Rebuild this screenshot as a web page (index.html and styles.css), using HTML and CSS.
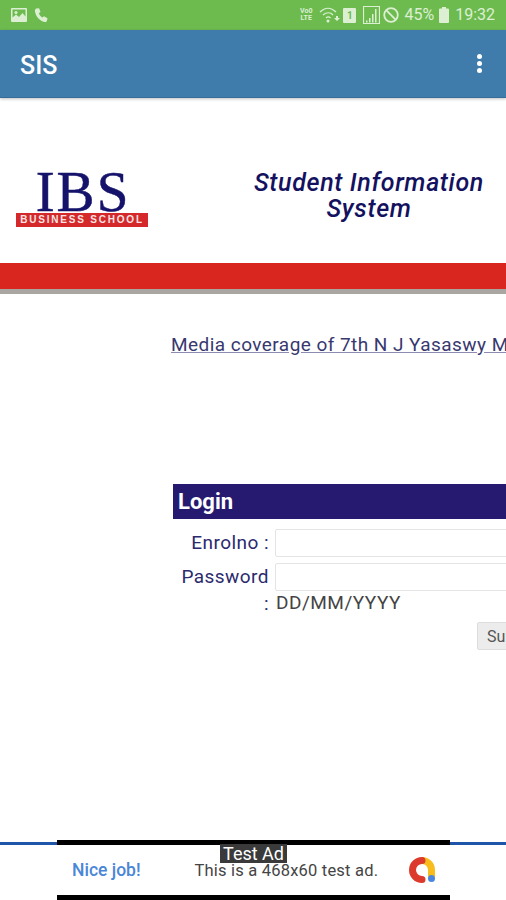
FILE: index.html
```html
<!DOCTYPE html>
<html lang="en">
<head>
    <meta charset="utf-8">
    <title>SIS</title>
    <link rel="stylesheet" href="styles.css">
</head>
<body>
<div class="status-bar">
    <div class="status-left">
        <svg width="16" height="14" viewBox="0 0 16 14"><path class="ic-fill" fill-rule="evenodd" d="M1 0h14a1 1 0 0 1 1 1v12a1 1 0 0 1-1 1H1a1 1 0 0 1-1-1V1a1 1 0 0 1 1-1zm.5 1.500v8l3.500-3 3 2.500 3.500-4 3 3.500V1.500z"/><circle class="ic-fill" cx="5" cy="4.500" r="1.500"/></svg>
        <svg width="14" height="15" viewBox="0 0 14 15"><path class="ic-fill" d="M2.500.5 5 .2l1.500 3.600-1.600 1.400c.6 1.700 1.900 3.300 3.500 4.300l1.600-1.200 3.500 2-.6 2.600c-.3.900-1.300 1.300-2.200 1.100C5.200 12.700 1.700 8.400.9 3 .8 1.800 1.500.8 2.500.5z"/></svg>
    </div>
    <div class="status-right">
        <div class="volte"><span>Vo0</span><span>LTE</span></div>
        <svg class="wifi" width="22" height="16" viewBox="0 0 22 16"><path class="ic-line" d="M1 5c5-5 11-5 16 0M4 8c3.500-3 7.500-3 10 0M7 11c1.500-1.500 3-1.500 4.500 0"/><circle class="ic-fill" cx="9" cy="14" r="1.500"/><path class="ic-fill" d="M17 9h2v2h2l-3 3-3-3h2z"/></svg>
        <div class="sim">1</div>
        <svg class="signal" width="17" height="18" viewBox="0 0 17 18"><path class="ic-line" d="M.5.500h16v17H.5z"/><path class="ic-fill" d="M3 14.500h1.500v2H3zM6 12h1.500v4.500H6zM9 8h1.500v8.500H9zM12 3h1.500v13.500H12z"/></svg>
        <svg width="16" height="16" viewBox="0 0 16 16"><circle class="ic-line ic-bold" cx="8" cy="8" r="6.800"/><path class="ic-line ic-bold" d="M3.200 3.200l9.600 9.600"/></svg>
        <span class="status-text status-pct">45%</span>
        <svg class="battery" width="10" height="16" viewBox="0 0 10 16"><path class="ic-fill" d="M3 0h4v1.500h2a1 1 0 0 1 1 1V15a1 1 0 0 1-1 1H1a1 1 0 0 1-1-1V2.500a1 1 0 0 1 1-1h2z"/></svg>
        <span class="status-text">19:32</span>
    </div>
</div>
<header class="app-bar">
    <div class="app-title">SIS</div>
    <div class="menu-dots"><i></i><i></i><i></i></div>
</header>
<main class="page">
    <div class="brand">
        <div class="logo">
            <div class="logo-ibs">IBS</div>
            <div class="logo-tag">BUSINESS SCHOOL</div>
        </div>
        <div class="brand-title">Student Information<br>System</div>
    </div>
    <div class="red-bar"></div>
    <div class="news"><a href="#">Media coverage of 7th N J Yasaswy Memorial Lecture</a></div>
    <form class="login" onsubmit="return false">
        <div class="login-title">Login</div>
        <div class="row">
            <label class="row-label" for="enrol">Enrolno :</label>
            <input class="field" id="enrol" type="text">
        </div>
        <div class="row row-pass">
            <label class="row-label" for="pass">Password :</label>
            <div class="pass-col">
                <input class="field" id="pass" type="password">
                <div class="hint">DD/MM/YYYY</div>
            </div>
        </div>
        <div class="submit-row"><button class="submit" type="submit">Submit</button></div>
    </form>
    <div class="footer-line"></div>
</main>
<div class="ad">
    <div class="ad-label">Test Ad</div>
    <div class="ad-body">
        <span class="ad-nice">Nice job!</span>
        <span class="ad-text">This is a 468x60 test ad.</span>
        <svg class="ad-logo" width="28" height="28" viewBox="0 0 28 28">
            <path d="M14 4.500a9.500 9.500 0 0 1 9.500 9.500v7" fill="none" stroke="#f8bd1c" stroke-width="7"/>
            <path d="M14 4.500a9.500 9.500 0 0 0 0 19" fill="none" stroke="#db3a2c" stroke-width="7" stroke-linecap="round"/>
            <circle cx="23.500" cy="22.500" r="3.500" fill="#4a86e0"/>
        </svg>
    </div>
</div>
</body>
</html>
```

FILE: styles.css
```css
html, body {
    margin: 0;
    height: 100%;
}

body {
    width: 506px;
    height: 900px;
    overflow: hidden;
    position: relative;
    display: flex;
    flex-direction: column;
    background: white;
    font-family: Roboto, sans-serif;
}

.status-bar {
    height: 30px;
    flex: none;
    background: #6dbb4f;
    display: flex;
    justify-content: space-between;
    align-items: center;
    padding: 0 11px;
    color: #dcefd3;
}

.status-left, .status-right {
    display: flex;
    align-items: center;
}

.status-left {
    gap: 7px;
}

.status-right {
    gap: 3px;
}

.ic-fill {
    fill: #dcefd3;
}

.ic-line {
    fill: none;
    stroke: #dcefd3;
    stroke-width: 1.2;
}

.ic-bold {
    stroke-width: 1.800;
}

.volte {
    display: flex;
    flex-direction: column;
    font-size: 7px;
    line-height: 7px;
    font-weight: 700;
    text-align: center;
    margin-right: 4px;
}

.wifi {
    margin-right: -1px;
}

.sim {
    width: 13px;
    height: 15px;
    background: #dcefd3;
    color: #6dbb4f;
    border-radius: 1px;
    font-size: 10px;
    line-height: 15px;
    font-weight: 700;
    text-align: center;
}

.signal {
    margin-left: 4px;
}

.status-text {
    font-size: 16px;
    line-height: 20px;
}

.status-pct {
    margin-left: 2px;
}

.battery {
    margin: 0 3px 0 2px;
}

.app-bar {
    height: 68px;
    flex: none;
    background: #3f7cab;
    border-bottom: 1px solid #356d98;
    box-shadow: 0 1px 3px rgba(0, 0, 0, .25);
    box-sizing: border-box;
    display: flex;
    justify-content: space-between;
    align-items: center;
    padding: 0 24px 0 20px;
    position: relative;
    color: white;
}

.app-title {
    font-size: 25px;
    font-weight: 500;
    padding-top: 3px;
}

.menu-dots {
    display: flex;
    flex-direction: column;
    gap: 2px;
}

.menu-dots i {
    width: 5px;
    height: 5px;
    border-radius: 50%;
    background: white;
}

.page {
    flex: 1;
    display: flex;
    flex-direction: column;
    min-height: 0;
}

.brand {
    height: 165px;
    flex: none;
    display: flex;
    align-items: center;
    padding: 36px 22px 0 16px;
    box-sizing: border-box;
}

.logo {
    width: 132px;
    flex: none;
    margin-top: 4px;
}

.logo-ibs {
    font-family: "Liberation Serif", serif;
    font-size: 57px;
    line-height: 36px;
    margin-bottom: 3px;
    padding-left: 2px;
    color: #14126a;
    text-align: center;
    letter-spacing: 2px;
    -webkit-text-stroke: .5px #14126a;
}

.logo-tag {
    background: #d4282a;
    color: #f7e4e2;
    height: 14px;
    font-family: "Liberation Sans", sans-serif;
    font-size: 10px;
    line-height: 14px;
    font-weight: 700;
    letter-spacing: 1.8px;
    text-align: center;
    white-space: nowrap;
}

.brand-title {
    flex: 1;
    text-align: center;
    font-size: 25px;
    line-height: 26px;
    font-weight: 500;
    font-style: italic;
    letter-spacing: .65px;
    color: #14125f;
    white-space: nowrap;
    padding-left: 106px;
    margin-bottom: 6px;
}

.red-bar {
    height: 26px;
    flex: none;
    background: #d9271f;
    border-bottom: 5px solid #a9a5a0;
}

.news {
    flex: none;
    height: 190px;
    padding: 39px 0 0 171px;
    box-sizing: border-box;
    white-space: nowrap;
    font-size: 19px;
    line-height: 24px;
    letter-spacing: .45px;
}

.news a {
    color: #38386f;
    text-decoration-color: #8d8caf;
}

.login {
    flex: none;
    width: 420px;
    margin-left: 173px;
    font-size: 19px;
}

.login-title {
    height: 35px;
    background: #261a70;
    color: white;
    font-size: 22px;
    font-weight: 700;
    line-height: 35px;
    padding-left: 5px;
}

.row {
    display: flex;
    margin-top: 10px;
    padding-left: 1px;
}

.row-pass {
    margin-top: 6px;
}

.row-label {
    width: 95px;
    flex: none;
    text-align: right;
    color: #2b2a6e;
    line-height: 27px;
    letter-spacing: .45px;
    margin-right: 6px;
}

.field {
    flex: 1;
    width: 300px;
    height: 28px;
    box-sizing: border-box;
    border: 1px solid #e4e4e4;
    border-radius: 2px;
    background: white;
    display: block;
}

.pass-col {
    flex: 1;
}

.hint {
    color: #444;
    line-height: 24px;
    letter-spacing: .5px;
    padding-left: 1px;
}

.submit-row {
    padding: 5px 0 0 304px;
}

.submit {
    width: 80px;
    height: 28px;
    font: 16px Roboto, sans-serif;
    color: #555;
    text-align: left;
    padding: 0 9px;
    background: #ececec;
    border: 1px solid #ddd;
    border-radius: 2px;
}

.footer-line {
    height: 3px;
    flex: none;
    background: #1f55a8;
    margin-top: auto;
    margin-bottom: 55px;
}

.ad {
    position: absolute;
    left: 57px;
    bottom: 0;
    width: 393px;
    height: 60px;
    box-sizing: border-box;
    background: black;
    padding: 5px 0;
}

.ad-label {
    position: absolute;
    top: 4px;
    left: 163px;
    width: 67px;
    height: 19px;
    background: #3a3a3a;
    color: white;
    font-size: 18px;
    line-height: 19px;
    text-align: center;
}

.ad-body {
    height: 50px;
    background: white;
    display: flex;
    align-items: center;
    padding: 0 14px 0 15px;
    font-size: 16.500px;
}

.ad-nice {
    color: #4a86d8;
    font-weight: 500;
    font-size: 17.500px;
}

.ad-text {
    color: #444;
    margin-left: 54px;
    flex: 1;
    letter-spacing: .2px;
}

.ad-logo {
    flex: none;
}
```
